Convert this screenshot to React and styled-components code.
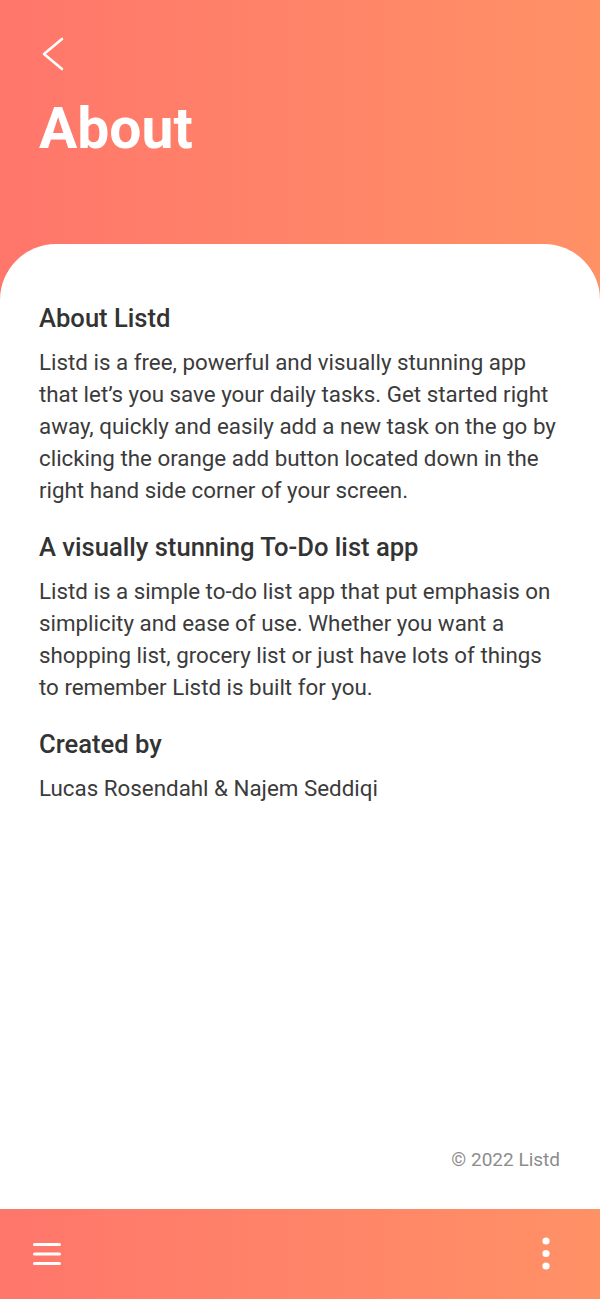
import React from 'react';
import styled, { createGlobalStyle } from 'styled-components';

const GlobalStyle = createGlobalStyle`
  body {
    margin: 0;
    background: #ffffff;
    font-family: Roboto, "Noto Sans", sans-serif;
  }
`;

const brand = 'linear-gradient(90deg, #ff766b 0%, #ff8568 55%, #ff9166 100%)';

const Screen = styled.div`
  width: 600px;
  height: 1299px;
  display: flex;
  flex-direction: column;
`;

const Top = styled.div`
  flex: 1;
  display: flex;
  flex-direction: column;
  background: ${brand};
`;

const Header = styled.header`
  height: 244px;
  box-sizing: border-box;
  padding: 36px 40px 0;
  color: #ffffff;
`;

const BackButton = styled.button`
  display: block;
  padding: 0;
  border: none;
  background: none;
  cursor: pointer;
  width: 26px;
  height: 36px;
`;

const Title = styled.h1`
  margin: 22px 0 0 -1px;
  font-size: 57px;
  line-height: 70px;
  font-weight: 700;
  letter-spacing: 0;
`;

const Sheet = styled.main`
  flex: 1;
  display: flex;
  flex-direction: column;
  background: #ffffff;
  border-radius: 56px 56px 0 0;
  padding: 58px 38px 37px 39px;
`;

const Heading = styled.h2`
  margin: ${(p) => (p.$first ? '0' : '25px')} 0 12px;
  font-size: 25.6px;
  line-height: 32px;
  font-weight: 500;
  color: #333333;
`;

const Text = styled.p`
  margin: 0;
  font-size: 22.35px;
  line-height: 32px;
  color: #3b3b3b;
`;

const Copyright = styled.div`
  margin-top: auto;
  margin-right: 2px;
  text-align: right;
  font-size: 19px;
  line-height: 24px;
  color: #8c8c8c;
`;

const BottomBar = styled.nav`
  height: 90px;
  flex-shrink: 0;
  display: flex;
  align-items: center;
  justify-content: space-between;
  padding: 0 50px 0 33px;
  background: ${brand};
`;

const IconButton = styled.button`
  display: flex;
  padding: 0;
  border: none;
  background: none;
  cursor: pointer;
`;

const BackIcon = () => (
  <svg width="26" height="36" viewBox="0 0 26 36" fill="none">
    <path d="M22 3 L4 18 L22 33" stroke="#ffffff" strokeWidth="2.6" strokeLinecap="round" strokeLinejoin="round" />
  </svg>
);

const MenuIcon = () => (
  <svg width="28" height="24" viewBox="0 0 28 24" fill="none">
    <path d="M1.5 2.5h25M1.5 12h25M1.5 21.5h25" stroke="#ffffff" strokeWidth="3" strokeLinecap="round" />
  </svg>
);

const MoreIcon = () => (
  <svg width="8" height="34" viewBox="0 0 8 34" fill="#ffffff">
    <circle cx="4" cy="4" r="3.6" />
    <circle cx="4" cy="16.5" r="3.6" />
    <circle cx="4" cy="29" r="3.6" />
  </svg>
);

const App = () => {
  return (
    <Screen>
      <GlobalStyle />
      <Top>
        <Header>
          <BackButton aria-label="Back">
            <BackIcon />
          </BackButton>
          <Title>About</Title>
        </Header>
        <Sheet>
          <Heading $first>About Listd</Heading>
          <Text>
            Listd is a free, powerful and visually stunning app that let’s you save your daily tasks. Get started right
            away, quickly and easily add a new task on the go by clicking the orange add button located down in the
            right hand side corner of your screen.
          </Text>
          <Heading>A visually stunning To-Do list app</Heading>
          <Text>
            Listd is a simple to-do list app that put emphasis on simplicity and ease of use. Whether you want a
            shopping list, grocery list or just have lots of things to remember Listd is built for you.
          </Text>
          <Heading>Created by</Heading>
          <Text>Lucas Rosendahl &amp; Najem Seddiqi</Text>
          <Copyright>© 2022 Listd</Copyright>
        </Sheet>
      </Top>
      <BottomBar>
        <IconButton aria-label="Menu">
          <MenuIcon />
        </IconButton>
        <IconButton aria-label="More">
          <MoreIcon />
        </IconButton>
      </BottomBar>
    </Screen>
  );
};

export default App;
